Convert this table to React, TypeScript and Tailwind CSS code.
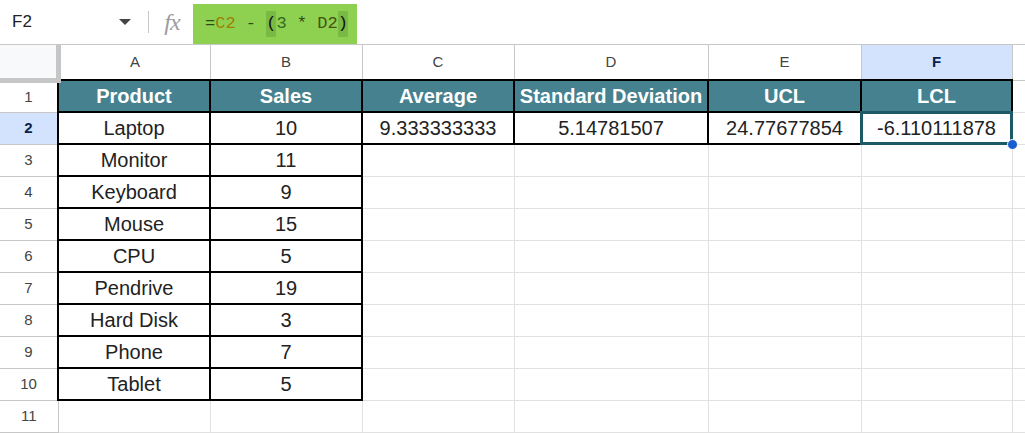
import React from "react";

const cols = ["A", "B", "C", "D", "E", "F", ""];
const widths = [58, 152, 152, 152, 194, 153, 151, 13];

const rows: string[][] = [
  ["Product", "Sales", "Average", "Standard Deviation", "UCL", "LCL"],
  ["Laptop", "10", "9.333333333", "5.14781507", "24.77677854", "-6.110111878"],
  ["Monitor", "11"],
  ["Keyboard", "9"],
  ["Mouse", "15"],
  ["CPU", "5"],
  ["Pendrive", "19"],
  ["Hard Disk", "3"],
  ["Phone", "7"],
  ["Tablet", "5"],
  [],
];

export default function App() {
  return (
    <div className="w-[1025px] h-[433px] overflow-hidden bg-white relative font-['Liberation_Sans',Arial,sans-serif]">
      {/* formula bar */}
      <div className="h-[45px] flex items-stretch border-b border-[#c7c7c7]">
        <div className="w-[148px] flex items-center pl-[12px] pr-[17px]">
          <span className="text-[17px] text-[#222] flex-1">F2</span>
          <svg width="12" height="6" viewBox="0 0 12 6">
            <path d="M0 0 L12 0 L6 6 Z" fill="#444" />
          </svg>
        </div>
        <div className="flex items-center">
          <div className="w-px h-[22px] bg-[#c7c7c7]" />
        </div>
        <div className="w-[44px] flex items-center justify-center pl-[2px]">
          <span className="font-['Liberation_Serif',serif] italic text-[24px] text-[#9c9c9c] tracking-[-1px] leading-none">fx</span>
        </div>
        <div className="mt-[4px] h-[40px] w-[164px] bg-[#8ed150] flex items-center pl-[12px] font-['Liberation_Mono',monospace] text-[17px] whitespace-pre text-[#2f4a1a]">
          <span>=</span>
          <span className="text-[#a07f00]">C2</span>
          <span> - </span>
          <span className="bg-[#79b944] text-[#111]">(</span>
          <span className="text-[#2e6b22]">3</span>
          <span> * </span>
          <span className="text-[#45520f]">D2</span>
          <span className="bg-[#79b944] text-[#111]">)</span>
        </div>
      </div>

      {/* grid */}
      <table className="border-collapse table-fixed" style={{ width: widths.reduce((a, b) => a + b, 0) }}>
        <colgroup>
          {widths.map((w, i) => (
            <col key={i} style={{ width: w }} />
          ))}
        </colgroup>
        <thead>
          <tr className="h-[35px]">
            <th className="bg-[#f8f9fa] border-r-[5px] border-b-[5px] border-[#c4c7c5] p-0" />
            {cols.map((c, i) => (
              <th
                key={i}
                className={`p-0 border-r border-b border-[#c7c7c7] text-[15px] ${
                  c === "F" ? "bg-[#d3e3fd] text-[#0b1f4d] font-bold" : "bg-white text-[#444] font-normal"
                }`}
              >
                {c}
              </th>
            ))}
          </tr>
        </thead>
        <tbody>
          {rows.map((r, ri) => {
            const rowNum = ri + 1;
            return (
              <tr key={ri} className="h-[32px]">
                <td
                  className={`p-0 text-center text-[15px] border-r border-b border-[#c7c7c7] ${
                    rowNum === 2 ? "bg-[#d3e3fd] text-[#0b1f4d] font-bold" : "bg-white text-[#444]"
                  }`}
                >
                  {rowNum}
                </td>
                {[0, 1, 2, 3, 4, 5, 6].map((ci) => {
                  const v = r[ci];
                  const isHeader = rowNum === 1 && ci < 6;
                  const bordered =
                    (ci < 2 && rowNum <= 10) || (ci >= 2 && ci < 6 && rowNum <= 2);
                  return (
                    <td
                      key={ci}
                      className={`p-0 text-center whitespace-nowrap overflow-hidden leading-none ${
                        bordered ? "border-2 border-black" : "border border-[#e1e1e1]"
                      } ${
                        isHeader
                          ? "bg-[#45818e] text-white font-bold text-[20px]"
                          : "text-[20px] text-[#222]"
                      }`}
                    >
                      {v ?? ""}
                    </td>
                  );
                })}
              </tr>
            );
          })}
        </tbody>
      </table>

      {/* selection overlay for F2 */}
      <div className="absolute left-[860px] top-[111px] w-[153px] h-[34px] border-[3px] border-[#1d5a66] pointer-events-none" />
      <div className="absolute left-[1007px] top-[139px] w-[11px] h-[11px] rounded-full bg-[#1a5fd0] border border-white pointer-events-none" />
    </div>
  );
}
